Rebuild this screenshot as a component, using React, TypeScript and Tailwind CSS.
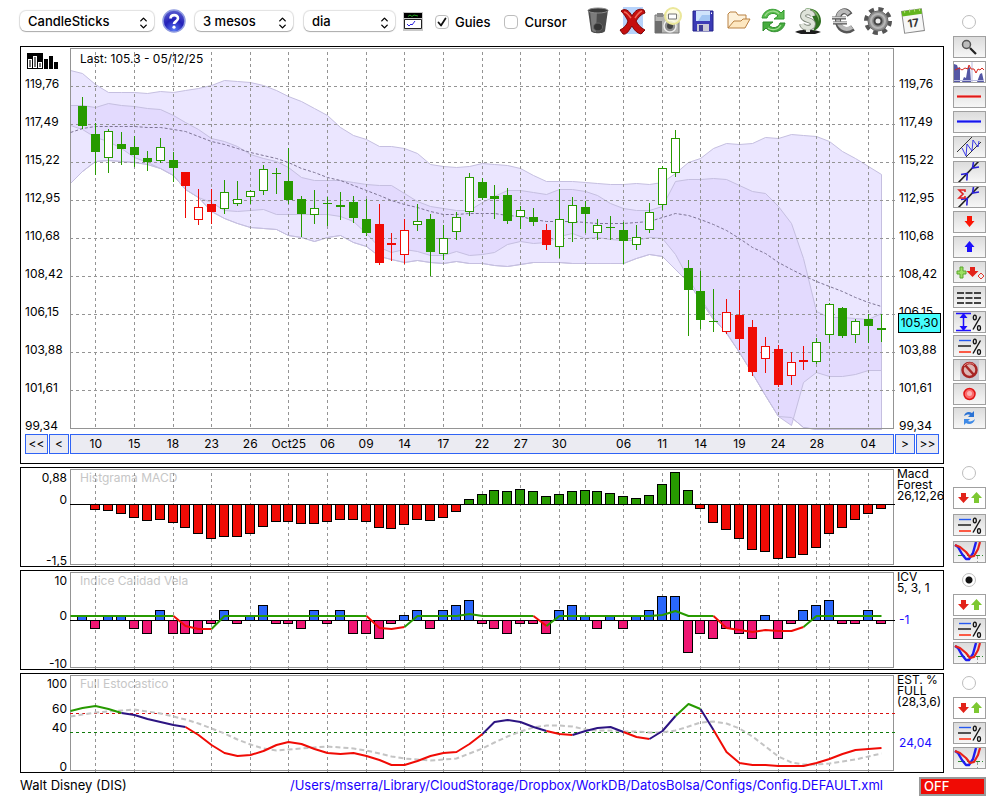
import React from 'react';
import { ChevronDown, ChevronUp } from 'lucide-react';

const GREEN = '#279a00';
const RED = '#f00b05';
const NAVY = '#2c1482';
const GRID = '#949494';

// Bars are 12.875px apart, snapped to whole pixels
const barX = (i: number) => Math.floor(82.9 + i * 12.875) + 0.5;
// Series start on the left edge of the plot, then one value per bar
const pointX = (k: number) => (k === 0 ? 70.5 : barX(k - 1));

const toPoints = (values: number[], from = 0, to = values.length - 1) =>
  values
    .slice(from, to + 1)
    .map((y, k) => `${pointX(from + k)},${y + 0.5}`)
    .join(' ');

const GRID_BARS = [1, 4, 7, 10, 13, 16, 19, 22, 25, 28, 31, 34, 37, 39, 42, 45, 48, 51, 54, 57, 58, 61];

const DATES: [number, string][] = [
  [1, '10'], [4, '15'], [7, '18'], [10, '23'], [13, '26'], [16, 'Oct25'], [19, '06'], [22, '09'], [25, '14'], [28, '17'],
  [31, '22'], [34, '27'], [37, '30'], [42, '06'], [45, '11'], [48, '14'], [51, '19'], [54, '24'], [57, '28'], [61, '04'],
];

const PRICES = ['119,76', '117,49', '115,22', '112,95', '110,68', '108,42', '106,15', '103,88', '101,61', '99,34'];

type Candle = [high: number, top: number, bottom: number, low: number, kind: string];

// Upper case = filled body, lower case = hollow body
const CANDLES: Candle[] = [
  [97, 106, 126, 129, 'G'], [123, 134, 152, 175, 'G'], [129, 131, 158, 173, 'g'], [132, 144, 149, 165, 'G'],
  [136, 147, 155, 167, 'G'], [151, 158, 162, 171, 'G'], [138, 147, 161, 163, 'g'], [152, 160, 168, 182, 'G'],
  [172, 172, 186, 218, 'R'], [189, 207, 220, 225, 'r'], [189, 204, 212, 224, 'R'], [180, 192, 209, 214, 'g'],
  [181, 199, 204, 206, 'g'], [190, 191, 197, 204, 'g'], [165, 169, 191, 195, 'g'], [168, 173, 174, 194, 'G'],
  [148, 181, 200, 204, 'G'], [196, 199, 214, 237, 'G'], [190, 208, 215, 224, 'g'], [197, 203, 204, 226, 'G'],
  [192, 205, 207, 220, 'G'], [196, 202, 218, 223, 'G'], [199, 219, 233, 236, 'G'], [204, 224, 263, 265, 'R'],
  [233, 243, 245, 261, 'R'], [219, 230, 255, 264, 'r'], [204, 221, 225, 231, 'g'], [214, 219, 252, 276, 'G'],
  [225, 238, 254, 260, 'g'], [212, 217, 232, 240, 'g'], [173, 177, 212, 216, 'g'], [178, 182, 198, 200, 'G'],
  [185, 196, 199, 219, 'G'], [188, 195, 221, 224, 'G'], [206, 210, 217, 229, 'g'], [208, 217, 222, 226, 'G'],
  [224, 230, 245, 250, 'R'], [189, 219, 247, 258, 'g'], [197, 205, 223, 242, 'g'], [201, 207, 214, 233, 'G'],
  [219, 225, 233, 240, 'g'], [216, 227, 228, 240, 'G'], [222, 230, 241, 264, 'G'], [225, 237, 245, 250, 'g'],
  [203, 212, 230, 233, 'g'], [166, 168, 205, 210, 'g'], [130, 138, 173, 177, 'g'], [260, 268, 290, 336, 'G'],
  [271, 291, 320, 329, 'G'], [289, 321, 322, 332, 'G'], [299, 312, 332, 334, 'r'], [290, 315, 339, 350, 'R'],
  [320, 327, 372, 376, 'R'], [337, 346, 359, 373, 'r'], [345, 349, 385, 387, 'R'], [352, 362, 376, 385, 'r'],
  [346, 360, 362, 370, 'R'], [338, 342, 362, 364, 'g'], [303, 304, 335, 343, 'g'], [307, 308, 336, 338, 'G'],
  [319, 321, 335, 343, 'g'], [314, 319, 326, 343, 'G'], [314, 328, 330, 342, 'G'],
];

const OUTER_TOP = [
  70, 73, 84, 92, 92, 92, 93, 91, 92, 90, 88, 85, 80, 81, 82, 85, 90, 96, 101, 108, 115, 127, 135, 139, 146, 146, 148, 153,
  164, 166, 167, 166, 163, 164, 165, 168, 175, 181, 181, 181, 182, 183, 184, 184, 183, 184, 182, 173, 162, 158, 148, 143,
  144, 143, 137, 138, 134, 135, 136, 141, 151, 158, 166, 174,
];
const OUTER_BOTTOM = [
  183, 171, 161, 160, 161, 162, 164, 168, 175, 189, 197, 211, 218, 223, 227, 228, 229, 235, 237, 241, 237, 235, 242, 246,
  256, 259, 262, 260, 262, 263, 261, 263, 263, 265, 266, 264, 262, 262, 262, 263, 263, 263, 263, 263, 258, 254, 256, 269,
  282, 300, 319, 332, 352, 373, 395, 416, 417, 427, 429, 429, 429, 429, 429, 429,
];
const INNER_TOP = [
  105, 105, 107, 103, 105, 106, 108, 109, 115, 122, 129, 138, 141, 146, 154, 158, 161, 167, 177, 180, 180, 180, 182, 184,
  185, 185, 193, 201, 206, 208, 210, 210, 202, 196, 190, 190, 192, 194, 189, 189, 191, 195, 203, 208, 210, 210, 206, 181,
  179, 179, 178, 179, 185, 191, 193, 206, 223, 258, 311, 317, 317, 318, 319, 313,
];
const INNER_BOTTOM = [
  125, 129, 137, 141, 148, 157, 162, 168, 175, 189, 197, 202, 210, 211, 210, 209, 214, 214, 214, 214, 214, 216, 221, 233,
  247, 252, 249, 251, 255, 255, 251, 255, 254, 252, 244, 241, 243, 242, 236, 233, 238, 237, 239, 240, 240, 237, 238, 254,
  278, 298, 317, 333, 352, 373, 395, 416, 425, 382, 372, 376, 376, 374, 370, 370,
];
const MEAN = [
  132, 128, 126, 126, 126, 126, 127, 127, 129, 131, 136, 141, 144, 148, 152, 155, 158, 162, 168, 172, 177, 180, 185, 190,
  195, 200, 204, 207, 211, 214, 214, 213, 213, 213, 215, 216, 219, 221, 221, 221, 222, 223, 223, 223, 222, 221, 217, 213,
  215, 219, 224, 230, 238, 247, 253, 262, 269, 275, 281, 286, 291, 297, 302, 306,
];

const MACD = [
  0, -5, -6, -9, -13, -16, -15, -18, -23, -29, -34, -32, -32, -29, -22, -17, -17, -19, -19, -17, -15, -15, -17, -23, -24,
  -20, -15, -16, -13, -7, 5, 10, 14, 13, 15, 13, 8, 10, 13, 14, 13, 11, 8, 6, 9, 20, 32, 14, -4, -18, -25, -34, -45, -47,
  -54, -53, -50, -43, -29, -23, -15, -9, -4,
];

const ICV = [
  5, -8, 5, 5, -8, -13, 10, -13, -13, -13, -3, 10, -3, 5, 15, -3, -3, -8, 10, -3, 10, -13, -13, -18, -3, 5, 10, -8, 10, 15,
  20, -3, -8, -13, -3, -3, -13, 10, 15, 5, -8, 5, -8, 5, 10, 24, 24, -32, -13, -18, -8, -13, -18, 5, -18, -3, 10, 15, 20,
  -3, -3, 10, -3,
];
const ICV_LINE = [
  615, 615, 615, 615, 615, 615, 615, 615, 615, 625, 628, 628, 615, 615, 615, 615, 615, 615, 615, 615, 615, 615, 615, 615,
  627, 628, 626, 615, 615, 615, 615, 613, 615, 615, 615, 615, 615, 625, 615, 615, 615, 615, 615, 615, 615, 615, 614, 610,
  615, 615, 615, 627, 629, 631, 629, 630, 630, 626, 615, 615, 615, 615, 615, 615,
];

const STOCH = [
  710, 707, 705, 708, 712, 714, 718, 721, 724, 726, 734, 744, 752, 755, 754, 750, 744, 741, 743, 748, 752, 753, 752, 755,
  759, 764, 764, 760, 755, 752, 751, 743, 733, 721, 719, 721, 726, 730, 733, 734, 730, 727, 726, 731, 736, 738, 730, 715,
  703, 708, 729, 751, 762, 764, 764, 765, 765, 765, 762, 758, 753, 749, 748, 747,
];
const STOCH_MEAN = [
  716, 714, 712, 711, 710, 709, 711, 713, 716, 719, 723, 728, 733, 739, 744, 748, 750, 749, 748, 747, 746, 747, 748, 750,
  753, 756, 758, 759, 760, 759, 758, 753, 748, 742, 736, 731, 727, 725, 725, 726, 729, 730, 730, 731, 731, 732, 732, 730,
  726, 722, 721, 723, 728, 736, 746, 756, 762, 764, 764, 763, 761, 759, 756, 753,
];

type Segment = [from: number, to: number, color: string];

const ICV_SEGMENTS: Segment[] = [
  [0, 8, GREEN], [8, 11, RED], [11, 23, GREEN], [23, 26, RED], [26, 36, GREEN], [36, 37, RED], [37, 50, GREEN],
  [50, 57, RED], [57, 63, GREEN],
];
const STOCH_SEGMENTS: Segment[] = [
  [0, 4, GREEN], [4, 9, NAVY], [9, 32, RED], [32, 37, NAVY], [37, 39, RED], [39, 43, NAVY], [43, 45, RED], [45, 47, NAVY],
  [47, 49, GREEN], [49, 50, NAVY], [50, 63, RED],
];

/* ---------- Charts ---------- */

const Frame: React.FC<{ top: number; height: number }> = ({ top, height }) => (
  <g shapeRendering="crispEdges" stroke={GRID} fill="none">
    {GRID_BARS.map((i) => (
      <line key={i} x1={barX(i)} x2={barX(i)} y1={top + 4} y2={top + height + 1} strokeDasharray="3 3" />
    ))}
    <rect x={70.5} y={top + 0.5} width={823} height={height - 1} />
  </g>
);

const Bars: React.FC<{ values: number[]; zero: number; up: string; down: string }> = ({ values, zero, up, down }) => (
  <g shapeRendering="crispEdges" stroke="#000">
    {values.map((v, i) =>
      v === 0 ? null : (
        <rect
          key={i}
          x={barX(i) - 5}
          y={v > 0 ? zero - v : zero}
          width={9}
          height={Math.abs(v)}
          fill={v > 0 ? up : down}
        />
      )
    )}
    <line x1={70} x2={895} y1={zero} y2={zero} />
  </g>
);

const Line: React.FC<{ values: number[]; segments: Segment[] }> = ({ values, segments }) => (
  <g fill="none" strokeWidth={2} strokeLinejoin="round" transform="translate(0 0.5)">
    {segments.map(([from, to, color]) => (
      <polyline key={from} points={toPoints(values, from, to)} stroke={color} />
    ))}
  </g>
);

const Band: React.FC<{ top: number[]; bottom: number[]; fill: string }> = ({ top, bottom, fill }) => (
  <polygon
    points={`${toPoints(top)} ${toPoints(bottom).split(' ').reverse().join(' ')}`}
    fill={fill}
    stroke="#c5bfe0"
  />
);

const PriceChart: React.FC = () => (
  <svg viewBox="70 48 824 381" preserveAspectRatio="none" className="block w-full h-[381px] overflow-visible">
    <Band top={OUTER_TOP} bottom={OUTER_BOTTOM} fill="#ebe6ff" />
    <Band top={INNER_TOP} bottom={INNER_BOTTOM} fill="#e3dafe" />
    <polyline points={toPoints(OUTER_BOTTOM)} fill="none" stroke="#c5bfe0" />
    <g shapeRendering="crispEdges" stroke={GRID}>
      {PRICES.slice(0, -1).map((price, i) => (
        <line key={price} x1={70} x2={895} y1={86.5 + i * 38} y2={86.5 + i * 38} strokeDasharray="3 3" />
      ))}
    </g>
    <Frame top={48} height={381} />
    <polyline points={toPoints(MEAN)} fill="none" stroke="#7d7494" strokeDasharray="3 2" />
    <g shapeRendering="crispEdges">
      {CANDLES.map(([high, top, bottom, low, kind], i) => {
        const color = kind.toUpperCase() === 'G' ? GREEN : RED;
        const hollow = kind === kind.toLowerCase();
        const x = barX(i);
        return (
          <g key={i} stroke={color}>
            <line x1={x} x2={x} y1={high} y2={low} />
            {hollow ? (
              <rect x={x - 4} y={top + 0.5} width={8} height={bottom - top - 1} fill="#fff" />
            ) : (
              <rect x={x - 4.5} y={top} width={9} height={bottom - top} fill={color} stroke="none" />
            )}
          </g>
        );
      })}
    </g>
  </svg>
);

/* ---------- Panels ---------- */

const NavButton: React.FC<{ label: string; className: string }> = ({ label, className }) => (
  <button className={`h-5 bg-[#ebebf2] border border-[#2f63f5] text-xs leading-[18px] text-center ${className}`}>
    {label}
  </button>
);

const PricePanel: React.FC = () => (
  <section className="border border-black pt-px pb-[9px]">
    <div className="flex h-[381px]">
      <div className="w-[49px] shrink-0 pl-1 pt-[5px]">
        <svg viewBox="0 0 31 16" className="block w-[31px] h-4 ml-[2px] -mb-1">
          <path d="M0 0h16v16H0zM17 6h4v10h-4zM22 3h4v13h-4zM27 9h4v7h-4z" />
          <path d="M1 6h4v9H1zM6 3h4v12H6zM11 9h4v6h-4z" fill="#fff" />
          <path d="M2 7h2v7H2zM7 4h2v10H7zM12 10h2v4h-2z" fill="#777" />
        </svg>
        {PRICES.map((price) => (
          <div key={price} className="leading-[38px]">{price}</div>
        ))}
      </div>
      <div className="relative flex-1 min-w-0">
        <PriceChart />
        <div className="absolute left-[10px] top-[3px] leading-4">Last: 105.3 - 05/12/25</div>
      </div>
      <div className="relative w-[49px] shrink-0 pl-[5px] pt-[17px]">
        {PRICES.map((price) => (
          <div key={price} className="leading-[38px]">{price}</div>
        ))}
        <div className="absolute left-1 top-[265px] w-[43px] h-5 bg-[#46fdfd] border border-black text-center leading-[18px]">
          105,30
        </div>
      </div>
    </div>

    {/* Time axis */}
    <div className="flex gap-px px-1 mt-[5px]">
      <NavButton label="<<" className="w-[23px]" />
      <NavButton label="<" className="w-5" />
      <div className="flex-1 grid grid-cols-[repeat(64,minmax(0,1fr))] h-5 bg-[#ebebf2] ring-1 ring-inset ring-[#2f63f5]">
        {DATES.map(([bar, label]) => (
          <span
            key={bar}
            className="row-start-1 flex justify-center whitespace-nowrap leading-5"
            style={{ gridColumn: `${bar + 1} / span 2` }}
          >
            {label}
          </span>
        ))}
      </div>
      <NavButton label=">" className="w-5" />
      <NavButton label=">>" className="w-[23px]" />
    </div>
  </section>
);

interface IndicatorPanelProps {
  title: string;
  top: number;
  scale: { label: string; className: string }[];
  legend: string[];
  value?: string;
  valueClass?: string;
  children: React.ReactNode;
}

const IndicatorPanel: React.FC<IndicatorPanelProps> = ({ title, top, scale, legend, value, valueClass, children }) => (
  <section className="flex h-[100px] border border-black pt-px">
    <div className="w-[49px] shrink-0 pr-[3px] text-right">
      {scale.map(({ label, className }) => (
        <div key={label} className={`leading-3 ${className}`}>{label}</div>
      ))}
    </div>
    <div className="relative flex-1 min-w-0">
      <div className="absolute left-[10px] top-px leading-4 text-[#c6c6c6]">{title}</div>
      <svg viewBox={`70 ${top} 824 96`} preserveAspectRatio="none" className="relative block w-full h-24 overflow-visible">
        <Frame top={top} height={96} />
        {children}
      </svg>
    </div>
    <div className="w-[49px] shrink-0 pl-[3px] -mt-px leading-[11px] whitespace-nowrap overflow-x-clip">
      {legend.map((line) => (
        <div key={line}>{line}</div>
      ))}
      {value && <div className={`pl-[2px] leading-3 text-[#1a0dff] ${valueClass}`}>{value}</div>}
    </div>
  </section>
);

/* ---------- Right hand tools ---------- */

const ToolButton: React.FC<{ label: string; plain?: boolean; children: React.ReactNode }> = ({ label, plain, children }) => (
  <button
    aria-label={label}
    className={`block w-[33px] h-[22px] border border-[#a0a0a0] ${plain ? 'bg-white' : 'bg-linear-to-b from-[#dcdcdc] to-[#f6f6f6]'}`}
  >
    <svg viewBox="1 1 31 20" className="block w-[31px] h-5" fill="none">
      {children}
    </svg>
  </button>
);

const Radio: React.FC<{ label: string; checked?: boolean }> = ({ label, checked }) => (
  <div className="flex h-5 mb-1 pr-[2px] items-center justify-center">
    <input
      type="radio"
      name="panel"
      aria-label={label}
      defaultChecked={checked}
      className="appearance-none size-[14px] rounded-full border border-[#bdbdbd] bg-white checked:bg-[radial-gradient(circle,#111_3px,#fff_4px)]"
    />
  </div>
);

const PercentSign = () => (
  <>
    <path d="M27.500 5.500 20 18.500" stroke="#111" strokeWidth="1.400" />
    <ellipse cx="21.800" cy="6.500" rx="1.500" ry="2.300" stroke="#111" strokeWidth="1.300" />
    <ellipse cx="26" cy="17" rx="1.500" ry="2.300" stroke="#111" strokeWidth="1.300" />
  </>
);

const LinesPercent = () => (
  <>
    <path d="M6 5.500h12" stroke="#2458f0" strokeWidth="1.400" />
    <path d="M5 11h13" stroke="#111" strokeWidth="1.400" />
    <path d="M6 17h12" stroke="#fb5a45" strokeWidth="2" />
    <PercentSign />
  </>
);

const TrendArrows = () => (
  <>
    <path d="M5 22 26 0" stroke="#222" strokeWidth="1.600" />
    <path d="M8 13.500l6.300-1-.5 7M26 6l-6.500 1L20.500 1" stroke="#2a20d8" strokeWidth="1.600" />
  </>
);

const SignalTools: React.FC = () => (
  <>
    <ToolButton label="Senyals" plain>
      <path d="M8 6h5v4h3l-5.500 6L5 10h3z" fill="#e2231a" />
      <path d="M21 16h5v-5h3l-5.500-6L18 11h3z" fill="#7dc832" />
    </ToolButton>
    <ToolButton label="Nivells">
      <LinesPercent />
    </ToolButton>
    <ToolButton label="Creuament">
      <path d="M5 14.500h25" stroke="#2f8a2f" strokeDasharray="4 2 1 2" />
      <path d="M24.500 15v6" stroke="#999" strokeDasharray="3 2" />
      <path d="m2 4 3 2 4 7 4 5h3l4-6 3-11" stroke="#1f1ff0" strokeWidth="2.400" strokeLinejoin="round" />
      <path d="m2 4 5 2 6 5 4 5 4-1 4-7 2-7" stroke="#e8231a" strokeWidth="2.200" strokeLinejoin="round" />
    </ToolButton>
  </>
);

const ChartTools: React.FC = () => (
  <>
    <div className="flex flex-col gap-[3px]">
      <ToolButton label="Lupa">
        <path d="m17 12 6 6" stroke="#222" strokeWidth="2.200" />
        <circle cx="13.500" cy="8.500" r="4" fill="#bcbcbc" stroke="#555" strokeWidth="1.500" />
      </ToolButton>
      <ToolButton label="Volum" plain>
        <path d="M1 21V3l3 1 1 3 2-1v15zM9 21l2-5 2 1 2-12 2 2 1 14zM24 21l3-8 2-1 2 9z" fill="#5457a5" />
        <path d="M19 1v20M1 19.500h30" stroke="#b9bbe0" />
        <path d="M2 9l4-2 3 2 3-2 3 1 1-4 2 4h3l2 4 2-4 2 1 2-2 2 2" stroke="#d9281e" />
      </ToolButton>
      <ToolButton label="Línia vermella">
        <path d="M4 10.500h24" stroke="#f0706c" strokeWidth="3" />
        <path d="M4 10.500h24" stroke="#dc1a1a" />
      </ToolButton>
      <ToolButton label="Línia blava">
        <path d="M4 10.500h24" stroke="#6b6bf5" strokeWidth="3" />
        <path d="M4 10.500h24" stroke="#1616ea" />
      </ToolButton>
      <ToolButton label="Canal">
        <path d="M4 16 19 1M13 21 28 6" stroke="#333" />
        <path d="m9 12 4 8 1-12 5 7 1-11 5 7 1-6" stroke="#3a3ae6" />
      </ToolButton>
      <ToolButton label="Tendència">
        <TrendArrows />
      </ToolButton>
      <ToolButton label="Tendència suma">
        <TrendArrows />
        <path d="M12 6V4H6l4 4-4 4h6v-2" stroke="#e02020" strokeWidth="1.600" />
      </ToolButton>
      <ToolButton label="Venda">
        <path d="M14 5h5v5h2.500L16.500 16 11.500 10H14z" fill="#fb1505" />
      </ToolButton>
      <ToolButton label="Compra">
        <path d="M14 16h5v-5h2.500L16.500 5l-5 6H14z" fill="#1d10fc" />
      </ToolButton>
      <ToolButton label="Afegir senyal">
        <path d="M7 6h3v4h3v3h-3v4H7v-4H4v-3h3z" fill="#9be060" stroke="#5aa52e" />
        <path d="M17 6h5v4h3.500l-6 6-6-6H17z" fill="#e2231a" />
        <path d="m28 12 3 3-3 3-3-3z" stroke="#e23a30" />
      </ToolButton>
      <ToolButton label="Nivells">
        <path d="M4 7h24M4 12h24M4 17h24" stroke="#444" strokeWidth="2" strokeDasharray="7 1.500" />
      </ToolButton>
    </div>
    <div className="flex flex-col gap-[2px] mt-[3px]">
      <ToolButton label="Rang">
        <path d="M3 2.500h15M3 19.500h15M10.500 4v14" stroke="#1d10fc" strokeWidth="1.500" />
        <path d="m10.500 2 4 5h-8zM10.500 20l4-5h-8z" fill="#1d10fc" />
        <PercentSign />
      </ToolButton>
      <ToolButton label="Percentatges">
        <LinesPercent />
      </ToolButton>
      <ToolButton label="Esborrar">
        <path d="M7 1h19v20H7z" fill="#c9c9d2" />
        <circle cx="16.500" cy="11" r="7" fill="#ddb5b5" stroke="#a82525" strokeWidth="2.500" />
        <path d="m12 6 9 10" stroke="#a82525" strokeWidth="2.500" />
        <path d="M11 7a7 7 0 0 1 10-1.500" stroke="#e08080" />
      </ToolButton>
      <ToolButton label="Gravar">
        <circle cx="16.500" cy="11" r="5.500" fill="#fb6a6a" stroke="#e01515" strokeWidth="1.500" />
        <circle cx="16.500" cy="10.500" r="2.500" fill="#fdb3b3" />
      </ToolButton>
      <ToolButton label="Recarregar">
        <path d="M11 9c1-4 5-5 8-3l2-2v6h-6l2-2c-2-1-4 0-6 1z" fill="#2a72d4" />
        <path d="M22 12c-1 5-6 6-9 4l-2 2v-6h6l-2 2c2 1 5 0 7-2z" fill="#3f8ae6" />
      </ToolButton>
    </div>
  </>
);

/* ---------- Top toolbar ---------- */

const Dropdown: React.FC<{ label: string; value: string; className: string }> = ({ label, value, className }) => (
  <div className={`relative shrink-0 ${className}`}>
    <select
      aria-label={label}
      className="appearance-none block w-full h-5 pl-2 rounded-md bg-white text-[13px] leading-5 font-medium shadow-[0_0_1px_1px_rgba(0,0,0,0.12),0_1px_1px_rgba(0,0,0,0.25)]"
    >
      <option>{value}</option>
    </select>
    <span className="absolute right-[5px] top-[3px] flex flex-col pointer-events-none">
      <ChevronUp className="size-[11px] -mb-1" strokeWidth={3} />
      <ChevronDown className="size-[11px]" strokeWidth={3} />
    </span>
  </div>
);

const Check: React.FC<{ label: string; checked?: boolean; className: string }> = ({ label, checked, className }) => (
  <label className={`flex items-center gap-[6px] mt-[2px] text-[13px] leading-5 font-medium ${className}`}>
    <span className="relative block size-[14px]">
      <input
        type="checkbox"
        defaultChecked={checked}
        className="peer appearance-none block size-[14px] rounded-[4px] border border-[#bdbdbd] bg-white"
      />
      <svg viewBox="0 0 14 14" className="absolute inset-0 hidden peer-checked:block pointer-events-none" fill="none">
        <path d="m3.500 7.500 2.500 3L10.500 3.500" stroke="#111" strokeWidth="1.800" strokeLinecap="round" strokeLinejoin="round" />
      </svg>
    </span>
    {label}
  </label>
);

const IconButton: React.FC<{ label: string; children: React.ReactNode }> = ({ label, children }) => (
  <button aria-label={label} className="w-[35px] h-[30px] flex items-center justify-center">
    <svg viewBox="0 0 30 30" className="size-[30px]" fill="none">
      {children}
    </svg>
  </button>
);

const Toolbar: React.FC = () => (
  <header className="flex items-center h-[46px] pb-1">
    <Dropdown label="Tipus de gràfic" value="CandleSticks" className="w-[134px]" />
    <button aria-label="Ajuda" className="ml-2">
      <svg viewBox="0 0 24 24" className="block size-6">
        <defs>
          <radialGradient id="help" cx="0.5" cy="0.9" r="0.9">
            <stop offset="0" stopColor="#5a7af5" />
            <stop offset="0.5" stopColor="#2320b8" />
            <stop offset="1" stopColor="#5b5fd0" />
          </radialGradient>
        </defs>
        <circle cx="12" cy="12" r="11" fill="url(#help)" stroke="#8f9be0" strokeWidth="1.500" />
        <path d="M8.500 9.500C8.500 5 16 5 16 9.300c0 3-4 3-4 5.700" fill="none" stroke="#fff" strokeWidth="2.600" />
        <circle cx="12" cy="18.200" r="1.600" fill="#fff" />
      </svg>
    </button>
    <Dropdown label="Període" value="3 mesos" className="w-[98px] ml-[9px]" />
    <Dropdown label="Interval" value="dia" className="w-[91px] ml-[11px]" />
    <button aria-label="Indicadors" className="ml-2">
      <svg viewBox="0 0 20 19" className="block w-5 h-[19px]">
        <path d="M0 0h20v19H0z" fill="#c9c9c9" />
        <path d="M1 1h18v5H1z" />
        <path d="M5 4.500 7 3l2 1.500L11 3l4 1" fill="none" stroke="#1fa51f" />
        <path d="M1.500 7.500h17v9h-17z" fill="#fff" stroke="#222" />
        <path d="m4 12 2 2 2-2 1 1 3-4" fill="none" stroke="#2a20e0" />
      </svg>
    </button>
    <Check label="Guies" checked className="ml-3" />
    <Check label="Cursor" className="ml-[14px]" />

    <div className="flex ml-auto mr-[14px]">
      <IconButton label="Paperera">
        <path d="M5 4h20l-3 21c-1 3-13 3-14 0z" fill="#4c4c4c" />
        <path d="M7 5h7l-1 21c-2 0-4-1-4-2z" fill="#7b7b7b" />
        <ellipse cx="15" cy="4.500" rx="10" ry="2.500" fill="#3a3a3a" stroke="#8c8c8c" />
        <ellipse cx="15" cy="21" rx="4.500" ry="4" fill="#333" stroke="#666" />
      </IconButton>
      <IconButton label="Eliminar">
        <path d="M5 1h20v27H5z" fill="#b7d3fb" />
        <path d="M3 5c4-3 8-1 11 5 3-6 7-8 12-6l1 3c-4 1-7 5-9 8 2 4 5 7 9 9l-4 4c-4-1-7-4-9-8-3 4-5 9-9 8l-3-4c4-2 7-5 8-9-2-4-4-7-7-10z" fill="#c50f0f" stroke="#7e0606" />
        <path d="M6 6c3 0 5 4 7 6M24 5c-3 1-5 4-7 7" stroke="#f26a5a" strokeWidth="1.500" />
      </IconButton>
      <IconButton label="Captura">
        <path d="M2 9h24v18H2z" fill="#b5b5b3" stroke="#777" />
        <path d="M2 15h7v12H2z" fill="#6d6d6d" />
        <path d="M4 7h6v4H4z" fill="#888" />
        <circle cx="17" cy="20" r="6" fill="#8f8f8f" stroke="#eee" strokeWidth="1.500" />
        <circle cx="17" cy="20" r="3" fill="#444" />
        <circle cx="20" cy="10" r="8" fill="#fffde0" fillOpacity="0.850" stroke="#ebe79a" strokeWidth="2" />
        <path d="M15.500 8h8v5h-8z" fill="#fff" stroke="#777" />
      </IconButton>
      <IconButton label="Desar">
        <path d="M5 5h20v20H5z" fill="#3b3bb5" stroke="#22228a" />
        <path d="M8 5h14v10H8z" fill="#cfe3fb" />
        <path d="M14 9h8v6H10z" fill="#a3c6f3" />
        <path d="M9 18h12v7H9z" fill="#c9c9d6" />
        <path d="M11 19h4v6h-4z" fill="#3b3b95" />
        <path d="M23 6.500h1v1.500h-1z" fill="#fff" />
      </IconButton>
      <IconButton label="Obrir">
        <path d="M5 22V8l2-2h6l2 3h8v4" fill="#fdf1da" stroke="#b98142" strokeLinejoin="round" />
        <path d="M5 22 11 15h7l2-2h7l-5 9z" fill="#fde7c0" stroke="#b98142" strokeLinejoin="round" />
      </IconButton>
      <IconButton label="Actualitzar">
        <path d="M4 12C6 2 18 1 23 7l3-3v9H16l4-3c-4-5-10-2-11 2z" fill="#5cbb50" stroke="#2f9a2c" />
        <path d="M27 17C25 27 13 28 8 22l-3 3v-9h10l-4 3c4 5 10 2 11-2z" fill="#46ac3e" stroke="#2d8a2a" />
        <path d="M7 10c3-6 11-6 14-2M10 22c4 3 10 2 13-3" stroke="#a1dd92" strokeWidth="1.200" />
      </IconButton>
      <IconButton label="Dòlar">
        <path d="M2 26c5-3 19-3 26 0l-6 2H8z" fill="#1c1c1c" />
        <path d="M12 3c9-2 16 4 16 12 0 5-4 9-8 10 3-4 3-15-8-22z" fill="#2f6e20" />
        <path d="M16 3c8 1 11 7 10 13-1-6-4-10-10-13z" fill="#7fb565" />
        <path d="M20 10c-1-5-10-5-10 0 0 5 10 3 10 8 0 5-10 5-11 0" stroke="#7d8578" strokeWidth="6" />
        <path d="M20 10c-1-5-10-5-10 0 0 5 10 3 10 8 0 5-10 5-11 0M15 3v4M15 21v5" stroke="#dfe3da" strokeWidth="4" />
      </IconButton>
      <IconButton label="Euro">
        <path d="M22 9C17 2 10 6 10 14s7 14 15 8" stroke="#555" strokeWidth="6" />
        <path d="M21 8C16 2 10 6 10 13s7 13 14 8" stroke="#b9b9b9" strokeWidth="4" />
        <path d="M4 12h14M5 17h14" stroke="#555" strokeWidth="3" />
        <path d="M4 11.500h14M5 16.500h14" stroke="#d2d2d2" strokeWidth="1.500" />
      </IconButton>
      <IconButton label="Configuració">
        <circle cx="15" cy="15" r="12" stroke="#555" strokeWidth="4" strokeDasharray="5 4.420" />
        <circle cx="15" cy="15" r="10" fill="#8d8d8d" stroke="#666" />
        <circle cx="15" cy="15" r="7" stroke="#b5b5b5" strokeWidth="2" />
        <circle cx="15" cy="15" r="3.500" fill="#eee" stroke="#444" strokeWidth="2" />
      </IconButton>
      <IconButton label="Calendari">
        <g transform="rotate(-8 15 15)">
          <path d="M5 4h20v22H5z" fill="#f7f7f7" stroke="#8a8a8a" />
          <path d="M5 4h20v5H5z" fill="#62b51e" />
          <path d="M8 3v3M13 3v3M18 3v3M23 3v3" stroke="#b5e07a" />
          <text x="15" y="21" textAnchor="middle" fontSize="11" fontWeight="700" fill="#333">17</text>
        </g>
      </IconButton>
    </div>
  </header>
);

export default function App() {
  return (
    <div className="min-h-[800px] bg-white text-black text-xs font-['Inter','Liberation_Sans',sans-serif]">
      <div className="flex gap-[9px] pl-5 pr-[14px]">
        <main className="flex-1 min-w-0">
          <Toolbar />
          <div className="flex flex-col gap-[3px]">
            <PricePanel />

            <IndicatorPanel
              title="Histgrama MACD"
              top={469}
              scale={[
                { label: '0,88', className: 'mt-[3px]' },
                { label: '0', className: 'mt-[10px]' },
                { label: '-1,5', className: 'mt-[49px]' },
              ]}
              legend={['Macd', 'Forest', '26,12,26']}
            >
              <Bars values={MACD} zero={504.5} up={GREEN} down={RED} />
            </IndicatorPanel>

            <IndicatorPanel
              title="Indice Calidad Vela"
              top={572}
              scale={[
                { label: '10', className: 'mt-[3px]' },
                { label: '0', className: 'mt-[23px]' },
                { label: '-10', className: 'mt-9' },
              ]}
              legend={['ICV', '5, 3, 1']}
              value="-1"
              valueClass="mt-[21px]"
            >
              <Bars values={ICV} zero={620.5} up="#2a67fb" down="#ef1673" />
              <Line values={ICV_LINE} segments={ICV_SEGMENTS} />
            </IndicatorPanel>

            <IndicatorPanel
              title="Full Estocastico"
              top={675}
              scale={[
                { label: '100', className: 'mt-[3px]' },
                { label: '60', className: 'mt-[13px]' },
                { label: '40', className: 'mt-[7px]' },
                { label: '0', className: 'mt-[27px]' },
              ]}
              legend={['EST. %', 'FULL', '(28,3,6)']}
              value="24,04"
              valueClass="mt-[30px]"
            >
              <g shapeRendering="crispEdges" strokeDasharray="3 3">
                <line x1={70} x2={895} y1={713.5} y2={713.5} stroke="#d81010" />
                <line x1={70} x2={895} y1={732.5} y2={732.5} stroke="#117a0b" />
              </g>
              <polyline points={toPoints(STOCH_MEAN)} fill="none" stroke="#c4c4c4" strokeWidth={2} strokeDasharray="5 3" />
              <Line values={STOCH} segments={STOCH_SEGMENTS} />
            </IndicatorPanel>
          </div>
        </main>

        <aside className="w-[33px] shrink-0 pt-3">
          <Radio label="Gràfic principal" />
          <ChartTools />
          <div className="flex flex-col mt-[34px]">
            <Radio label="MACD" />
            <div className="flex flex-col gap-[5px]">
              <SignalTools />
            </div>
          </div>
          <div className="flex flex-col mt-[7px]">
            <Radio label="ICV" checked />
            <div className="flex flex-col gap-[2px]">
              <SignalTools />
            </div>
          </div>
          <div className="flex flex-col mt-[9px]">
            <Radio label="Estocastico" />
            <div className="flex flex-col gap-[3px]">
              <SignalTools />
            </div>
          </div>
        </aside>
      </div>

      <footer className="flex items-center h-[26px] pl-5 pr-[14px]">
        <span className="text-[13px]">Walt Disney (DIS)</span>
        <span className="ml-auto mr-9 text-[13px] text-[#1a00ff]">
          /Users/mserra/Library/CloudStorage/Dropbox/WorkDB/DatosBolsa/Configs/Config.DEFAULT.xml
        </span>
        <button className="w-[67px] h-[19px] pl-[3px] bg-[#f00b05] border-2 border-[#999] text-left text-[13px] leading-[15px] font-medium text-white">
          OFF
        </button>
      </footer>
    </div>
  );
}
